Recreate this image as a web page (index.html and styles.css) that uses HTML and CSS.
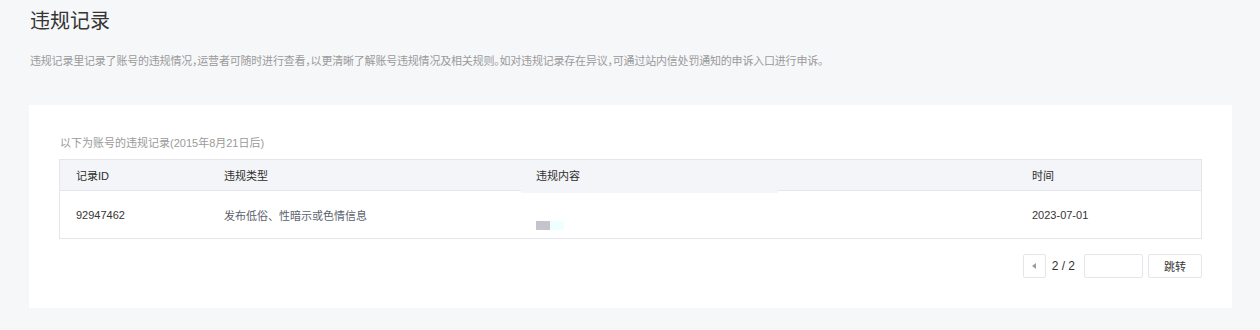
FILE: index.html
```html
<!DOCTYPE html>
<html lang="zh-CN">
<head>
  <title>违规记录</title>
  <meta charset="utf-8">
  <meta name="viewport" content="width=device-width, initial-scale=1">
  <link rel="stylesheet" href="styles.css">
</head>
<body>
  <div class="page">
    <h1 class="page-title">违规记录</h1>
    <p class="page-desc">违规记录里记录了账号的违规情况，运营者可随时进行查看，以更清晰了解账号违规情况及相关规则。如对违规记录存在异议，可通过站内信处罚通知的申诉入口进行申诉。</p>

    <section class="card">
      <p class="card-tip">以下为账号的违规记录(2015年8月21日后)</p>
      <div class="table">
        <div class="table-row table-head">
          <div class="cell">记录ID</div>
          <div class="cell">违规类型</div>
          <div class="cell cell-content">违规内容</div>
          <div class="cell">时间</div>
        </div>
        <div class="table-row table-body">
          <div class="cell cell-id">92947462</div>
          <div class="cell cell-type">发布低俗、性暗示或色情信息</div>
          <div class="cell">
            <span class="thumb">
              <span class="thumb-a"></span>
              <span class="thumb-b"></span>
            </span>
          </div>
          <div class="cell cell-id">2023-07-01</div>
        </div>
      </div>

      <div class="pager">
        <button class="pager-btn pager-prev" type="button" aria-label="上一页"></button>
        <span class="pager-num">2 / 2</span>
        <input class="pager-input" type="text">
        <button class="pager-btn pager-go" type="button">跳转</button>
      </div>
    </section>
  </div>
</body>
</html>
```

FILE: styles.css
```css
*, *::before, *::after {
  margin: 0;
  padding: 0;
  box-sizing: border-box;
}

body {
  background-color: #F6F7F9;
  color: #333333;
  font-size: 11px;
  font-family: "Liberation Sans", "Noto Sans CJK SC", sans-serif;
}

.page {
  padding: 7px 28px 22px 29px;
}

.page-title {
  padding-left: 1px;
  font-size: 20px;
  font-weight: 400;
  line-height: 28px;
  color: #353535;
}

.page-desc {
  margin-top: 17px;
  padding-left: 1px;
  line-height: 18px;
  color: #9A9A9A;
  letter-spacing: -0.2px;
  font-feature-settings: "halt";
}

.card {
  margin-top: 35px;
  padding: 29px 30px 30px 30px;
  background-color: #FFFFFF;
}

.card-tip {
  padding-left: 1px;
  line-height: 18px;
  color: #9A9A9A;
}

.table {
  margin-top: 7px;
  border: 1px solid #E4E6EB;
}

.table-row {
  display: grid;
  grid-template-columns: 148px 312px 496px 1fr;
}

.table-head {
  height: 31px;
  background-color: #F4F5F8;
  border-bottom: 1px solid #E4E6EB;
  color: #2E2E2E;
}

.table-body {
  height: 47px;
}

.cell {
  display: flex;
  align-items: center;
  padding-left: 16px;
}

.table-head .cell {
  padding-bottom: 1px;
}

.cell-content {
  position: relative;
}

.cell-content::after {
  content: "";
  position: absolute;
  left: 1px;
  bottom: -3px;
  width: 257px;
  height: 3px;
  background-color: #F4F5F8;
}

.cell-id {
  color: #353535;
}

.cell-type {
  color: #5B5F6E;
}

.thumb {
  display: flex;
  margin-top: 21px;
}

.thumb-a, .thumb-b {
  width: 14px;
  height: 9px;
}

.thumb-a {
  background-color: #C5C3CC;
}

.thumb-b {
  background-color: #EFFFFE;
}

.pager {
  display: flex;
  justify-content: flex-end;
  align-items: center;
  margin-top: 15px;
}

.pager-btn, .pager-input {
  height: 24px;
  border: 1px solid #E4E6EB;
  border-radius: 2px;
  background-color: #FFFFFF;
  font-family: inherit;
  font-size: 11px;
  color: #333333;
}

.pager-prev {
  position: relative;
  width: 23px;
}

.pager-prev::before {
  content: "";
  position: absolute;
  left: 8px;
  top: 8px;
  border-top: 3px solid transparent;
  border-bottom: 3px solid transparent;
  border-right: 4px solid #9C9C9C;
}

.pager-num {
  margin: 0 9px 0 6px;
  font-size: 12px;
  color: #333333;
}

.pager-input {
  width: 59px;
  outline: none;
}

.pager-go {
  width: 54px;
  margin-left: 5px;
}
```
